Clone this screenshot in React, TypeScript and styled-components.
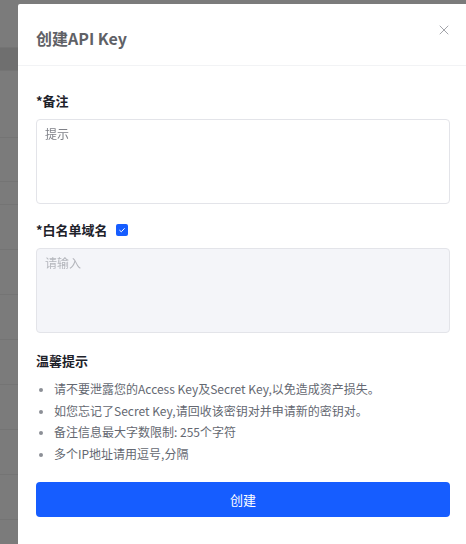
import React from "react";
import styled, { createGlobalStyle } from "styled-components";

const GlobalStyle = createGlobalStyle`
  html, body {
    margin: 0;
    padding: 0;
    height: 100%;
    overflow: hidden;
    background: #7b7b7b;
  }
  #root {
    height: 100%;
  }
`;

const Page = styled.div`
  display: flex;
  height: 544px;
  width: 466px;
  overflow: hidden;
  font-family: "Noto Sans CJK SC", "Noto Sans", sans-serif;
`;

const Backdrop = styled.div`
  width: 18px;
  flex-shrink: 0;
  display: flex;
  flex-direction: column;
  padding-top: 4px;
  background: #7b7b7b;
`;

const BackdropRow = styled.div<{ $h: number; $dark?: boolean }>`
  height: ${(p) => p.$h}px;
  flex-shrink: 0;
  background: ${(p) => (p.$dark ? "#6f6f6f" : "#7b7b7b")};
  border-bottom: 1px solid #747474;
`;

const Column = styled.div`
  padding-top: 4px;
  flex-shrink: 0;
`;

const Modal = styled.div`
  width: 450px;
  background: #ffffff;
  border-radius: 2px 0 0 0;
  min-height: 560px;
`;

const Header = styled.div`
  height: 61px;
  display: flex;
  align-items: center;
  justify-content: space-between;
  padding: 0 18px;
  border-bottom: 1px solid #f2f3f5;
`;

const Title = styled.div`
  font-size: 16px;
  font-weight: 700;
  color: #5f6166;
  margin-top: 7px;
`;

const Close = styled.button`
  border: none;
  background: none;
  padding: 0;
  width: 10px;
  height: 10px;
  margin-top: -10px;
  margin-right: 1px;
  display: flex;
  cursor: pointer;
`;

const Body = styled.div`
  padding: 24px 18px 0;
  display: flex;
  flex-direction: column;
`;

const Label = styled.div<{ $gap?: number }>`
  display: flex;
  align-items: center;
  gap: 8px;
  font-size: 13px;
  line-height: 22px;
  font-weight: 700;
  color: #1d2129;
  margin-top: ${(p) => p.$gap ?? 0}px;
`;

const Check = styled.span`
  width: 12px;
  height: 12px;
  border-radius: 2px;
  background: #165dff;
  display: inline-flex;
  align-items: center;
  justify-content: center;
`;

const Area = styled.textarea<{ $disabled?: boolean }>`
  box-sizing: border-box;
  width: 414px;
  height: 85px;
  margin-top: 7px;
  padding: 5px 8px;
  resize: none;
  border: 1px solid #e3e4e9;
  border-radius: 4px;
  background: ${(p) => (p.$disabled ? "#f4f5f9" : "#ffffff")};
  font-family: inherit;
  font-size: 12px;
  line-height: 18px;
  outline: none;
  &::placeholder {
    color: ${(p) => (p.$disabled ? "#b4b6bc" : "#7f8188")};
    filter: blur(0.3px);
  }
`;

const Tips = styled.ul`
  margin: 6px 0 0;
  padding: 0 0 0 18px;
  font-size: 12px;
  line-height: 21.7px;
  color: #646871;
  li::marker {
    color: #8c8f96;
    font-size: 10px;
  }
`;

const Submit = styled.button`
  margin-top: 17px;
  width: 414px;
  height: 35px;
  border: none;
  border-radius: 4px;
  background: #165dff;
  color: #ffffff;
  font-family: inherit;
  font-size: 13px;
  cursor: pointer;
`;

const rows = [
  { h: 43 },
  { h: 22, dark: true },
  { h: 66 },
  { h: 43 },
  { h: 22 },
  { h: 44 },
  { h: 44 },
  { h: 44 },
  { h: 44 },
  { h: 44 },
  { h: 44 },
  { h: 44 },
];

const tips = [
  "请不要泄露您的Access Key及Secret Key,以免造成资产损失。",
  "如您忘记了Secret Key,请回收该密钥对并申请新的密钥对。",
  "备注信息最大字数限制: 255个字符",
  "多个IP地址请用逗号,分隔",
];

export default function App() {
  return (
    <Page>
      <GlobalStyle />
      <Backdrop>
        {rows.map((r, i) => (
          <BackdropRow key={i} $h={r.h} $dark={r.dark} />
        ))}
      </Backdrop>
      <Column>
        <Modal>
          <Header>
            <Title>创建API Key</Title>
            <Close aria-label="关闭">
              <svg width="10" height="10" viewBox="0 0 10 10">
                <path
                  d="M1 1L9 9M9 1L1 9"
                  stroke="#a3a5ab"
                  strokeWidth="1"
                  strokeLinecap="round"
                />
              </svg>
            </Close>
          </Header>
          <Body>
            <Label>*备注</Label>
            <Area placeholder="提示" />
            <Label $gap={15}>
              *白名单域名
              <Check>
                <svg width="8" height="8" viewBox="0 0 8 8">
                  <path
                    d="M1.4 4.1L3.3 5.8L6.6 2.3"
                    fill="none"
                    stroke="#ffffff"
                    strokeWidth="1"
                  />
                </svg>
              </Check>
            </Label>
            <Area $disabled disabled placeholder="请输入" />
            <Label $gap={17}>温馨提示</Label>
            <Tips>
              {tips.map((t) => (
                <li key={t}>{t}</li>
              ))}
            </Tips>
            <Submit>创建</Submit>
          </Body>
        </Modal>
      </Column>
    </Page>
  );
}
